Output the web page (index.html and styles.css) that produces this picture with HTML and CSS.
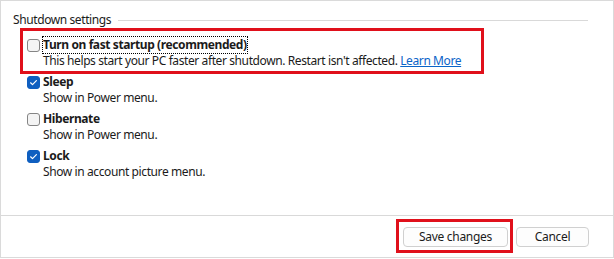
FILE: index.html
```html
<!DOCTYPE html>
<html>
<head>
<meta charset="utf-8">
<link rel="stylesheet" href="styles.css">
</head>
<body>
<div class="window">
  <div class="main">
    <div class="legend"><span class="legend-text">Shutdown settings</span><span class="legend-line"></span></div>
    <div class="items">
      <div class="item highlight">
        <div class="title"><span class="box"></span><span class="label focus">Turn on fast startup (recommended)</span></div>
        <div class="desc">This helps start your PC faster after shutdown. Restart isn't affected. <a class="link">Learn More</a></div>
      </div>
      <div class="item">
        <div class="title"><span class="box checked"><svg viewBox="0 0 13 13" width="13" height="13"><path d="M3.6 6.8 L5.5 8.6 L9.4 4.6" fill="none" stroke="#fff" stroke-width="1.2" stroke-linecap="round" stroke-linejoin="round"/></svg></span><span class="label">Sleep</span></div>
        <div class="desc">Show in Power menu.</div>
      </div>
      <div class="item">
        <div class="title"><span class="box"></span><span class="label">Hibernate</span></div>
        <div class="desc">Show in Power menu.</div>
      </div>
      <div class="item">
        <div class="title"><span class="box checked"><svg viewBox="0 0 13 13" width="13" height="13"><path d="M3.6 6.8 L5.5 8.6 L9.4 4.6" fill="none" stroke="#fff" stroke-width="1.2" stroke-linecap="round" stroke-linejoin="round"/></svg></span><span class="label">Lock</span></div>
        <div class="desc">Show in account picture menu.</div>
      </div>
    </div>
  </div>
  <div class="footer">
    <span class="btn-highlight"><button class="btn save">Save changes</button></span>
    <button class="btn cancel">Cancel</button>
  </div>
</div>
</body>
</html>
```
FILE: styles.css
```css
html, body {
  margin: 0;
  padding: 0;
  background: #ffffff;
}
body {
  font-family: "Noto Sans", "Open Sans", sans-serif;
  font-size: 12px;
  letter-spacing: -0.4px;
  color: #1b1b1b;
}
.window {
  box-sizing: border-box;
  width: 614px;
  height: 258px;
  border: 1px solid #dadada;
  display: flex;
  flex-direction: column;
  background: #fff;
}
.main {
  flex: 1;
  padding: 11px 25px 0 12px;
}
.legend {
  display: flex;
  align-items: center;
  height: 16px;
  line-height: 16px;
}
.legend-text {
  white-space: nowrap;
}
.legend-line {
  flex: 1;
  height: 1px;
  background: #d9d9d9;
  margin-left: 7px;
}
.items {
  display: flex;
  flex-direction: column;
  gap: 5px;
  padding-left: 14px;
}
.item {
  display: flex;
  flex-direction: column;
}
.highlight {
  box-sizing: border-box;
  width: 464px;
  margin-left: -7px;
  margin-bottom: -5px;
  border: 3px solid #e0101b;
  padding: 6px 0 2px 4px;
}
.title {
  display: flex;
  align-items: center;
  height: 16px;
  line-height: 16px;
  font-weight: 700;
}
.box {
  box-sizing: border-box;
  width: 13px;
  height: 13px;
  border: 1px solid #858585;
  border-radius: 3px;
  background: #f4f4f4;
  margin-right: 3px;
  flex: none;
  display: flex;
}
.box.checked {
  background: #0f5fc0;
  border-color: #0f5fc0;
}
.box.checked svg {
  margin: -1px;
}
.label.focus {
  outline: 1px dotted #000;
  outline-offset: 0;
}
.desc {
  height: 16px;
  line-height: 16px;
  padding-left: 16px;
  white-space: nowrap;
}
.link {
  color: #0a64c8;
  text-decoration: underline;
}
.footer {
  height: 38px;
  border-top: 1px solid #d9d9d9;
  display: flex;
  align-items: flex-start;
  justify-content: flex-end;
  padding-right: 24px;
  padding-top: 3px;
}
.btn-highlight {
  display: flex;
  border: 3px solid #e0101b;
  padding: 5px 2px 3px 4px;
}
.btn {
  box-sizing: border-box;
  height: 20px;
  font-family: inherit;
  font-size: 12px;
  letter-spacing: -0.3px;
  color: #1b1b1b;
  background: #fdfdfd;
  border: 1px solid #d0d0d0;
  border-radius: 4px;
  padding: 0;
  line-height: 18px;
}
.save {
  width: 105px;
}
.cancel {
  width: 73px;
  margin-left: 3px;
  margin-top: 8px;
}
```
